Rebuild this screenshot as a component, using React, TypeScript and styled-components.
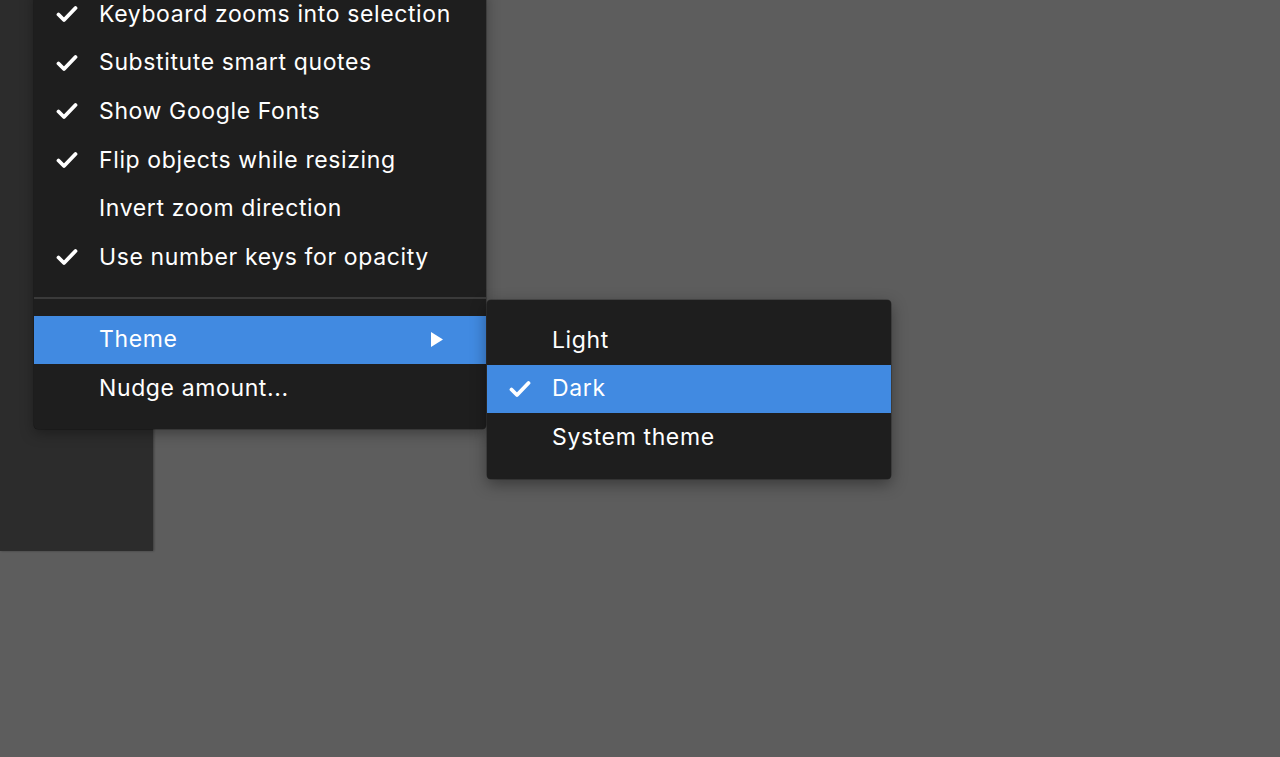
import React from "react";
import styled, { createGlobalStyle } from "styled-components";

const GlobalStyle = createGlobalStyle`
  html, body {
    margin: 0;
    padding: 0;
    background: #5e5e5e;
    overflow: hidden;
  }
  body {
    font-family: Inter, "Noto Sans", sans-serif;
    -webkit-font-smoothing: antialiased;
  }
`;

interface Item {
  label: string;
  checked?: boolean;
  submenu?: boolean;
  active?: boolean;
}

const preferences: Item[] = [
  { label: "Keyboard zooms into selection", checked: true },
  { label: "Substitute smart quotes", checked: true },
  { label: "Show Google Fonts", checked: true },
  { label: "Flip objects while resizing", checked: true },
  { label: "Invert zoom direction" },
  { label: "Use number keys for opacity", checked: true },
];

const settings: Item[] = [
  { label: "Theme", submenu: true, active: true },
  { label: "Nudge amount..." },
];

const themes: Item[] = [
  { label: "Light" },
  { label: "Dark", checked: true, active: true },
  { label: "System theme" },
];

const Check = () => (
  <svg width="22" height="18" viewBox="0 0 22 18">
    <path
      d="M2.5 9.5 L8 15 L19.5 3"
      fill="none"
      stroke="#fff"
      strokeWidth="3.8"
      strokeLinecap="round"
      strokeLinejoin="round"
    />
  </svg>
);

const Arrow = () => (
  <svg width="12" height="15" viewBox="0 0 12 15">
    <path d="M0 0 L12 7.5 L0 15 Z" fill="#fff" />
  </svg>
);

function MenuRow({ item }: { item: Item }) {
  return (
    <Row $active={item.active}>
      <CheckSlot>{item.checked ? <Check /> : null}</CheckSlot>
      <Label>{item.label}</Label>
      {item.submenu ? (
        <ArrowSlot>
          <Arrow />
        </ArrowSlot>
      ) : null}
    </Row>
  );
}

export default function App() {
  return (
    <>
      <GlobalStyle />
      <Canvas>
        <SidePanel />
        <MainMenu>
          <Group>
            {preferences.map((item) => (
              <MenuRow key={item.label} item={item} />
            ))}
          </Group>
          <Separator />
          <Group>
            {settings.map((item) => (
              <MenuRow key={item.label} item={item} />
            ))}
          </Group>
        </MainMenu>
        <SubMenu>
          {themes.map((item) => (
            <MenuRow key={item.label} item={item} />
          ))}
        </SubMenu>
      </Canvas>
    </>
  );
}

const Canvas = styled.div`
  position: relative;
  width: 1280px;
  height: 757px;
  background: #5d5d5d;
  overflow: hidden;
`;

const SidePanel = styled.div`
  width: 153px;
  height: 551px;
  background: #2c2c2c;
  box-shadow: 1px 0 2px rgba(0, 0, 0, 0.35);
`;

const MainMenu = styled.div`
  position: absolute;
  left: 34px;
  top: -10px;
  width: 452px;
  padding-bottom: 16px;
  background: #1e1e1e;
  border-radius: 0 0 4px 4px;
  box-shadow: 0 4px 14px rgba(0, 0, 0, 0.35), 0 0 0 0.5px rgba(0, 0, 0, 0.4);
`;

const SubMenu = styled.div`
  position: absolute;
  left: 487px;
  top: 300px;
  width: 404px;
  padding: 16px 0 17px;
  background: #1e1e1e;
  border-radius: 4px;
  box-shadow: 0 5px 16px rgba(0, 0, 0, 0.4), 0 0 0 0.5px rgba(0, 0, 0, 0.4);
`;

const Group = styled.div`
  display: flex;
  flex-direction: column;
`;

const Separator = styled.div`
  height: 2px;
  margin: 15px 0 17px;
  background: #3a3a3a;
`;

const Row = styled.div<{ $active?: boolean }>`
  display: flex;
  align-items: center;
  height: 48.6px;
  background: ${(p) => (p.$active ? "#418ae1" : "transparent")};
  color: #fff;
`;

const CheckSlot = styled.div`
  display: flex;
  align-items: center;
  width: 65px;
  padding-left: 22px;
  box-sizing: border-box;
  flex-shrink: 0;
`;

const Label = styled.span`
  flex: 1;
  font-size: 23px;
  letter-spacing: 0.62px;
  line-height: 1;
  white-space: nowrap;
`;

const ArrowSlot = styled.div`
  display: flex;
  align-items: center;
  padding-right: 43px;
`;
